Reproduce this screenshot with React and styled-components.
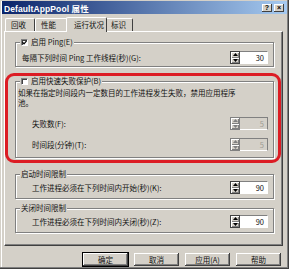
import React from "react";
import styled, { createGlobalStyle } from "styled-components";

const GlobalStyle = createGlobalStyle`
  html, body {
    margin: 0;
    padding: 0;
    background: #d4d0c8;
  }
  body {
    font-family: "Noto Sans CJK SC", "Liberation Sans", sans-serif;
    font-size: 7.5px;
    color: #111;
  }
`;

const Window = styled.div`
  width: 289px;
  height: 269px;
  box-sizing: border-box;
  padding: 1px 2px 0;
  background: #d4d0c8;
  box-shadow: inset -1px -1px #404040, inset -2px -2px #808080,
    inset 1px 1px #d4d0c8, inset 2px 2px #fff;
  display: flex;
  flex-direction: column;
`;

const TitleBar = styled.div`
  height: 13px;
  display: flex;
  align-items: center;
  padding: 0 3px 0 2px;
  background: linear-gradient(to right, #0a246a, #a6caf0);
  color: #fff;
`;

const TitleText = styled.span`
  font-family: "Liberation Sans", "Noto Sans CJK SC", sans-serif;
  font-size: 8.5px;
  font-weight: bold;
  letter-spacing: 0.1px;
`;

const TitleButtons = styled.div`
  margin-left: auto;
  display: flex;
  gap: 2px;
`;

const TitleButton = styled.span`
  width: 10px;
  height: 8px;
  background: #d4d0c8;
  color: #000;
  box-shadow: inset -1px -1px #404040, inset 1px 1px #fff;
  font-family: "Liberation Sans", sans-serif;
  font-size: 7px;
  font-weight: bold;
  line-height: 8px;
  text-align: center;
`;

const TabRow = styled.div`
  height: 16px;
  margin-top: 1px;
  padding-left: 3px;
  display: flex;
  align-items: flex-end;
  position: relative;
  z-index: 1;
`;

const Tab = styled.div`
  width: ${(p) => p.$w}px;
  height: ${(p) => (p.$active ? 15 : 13)}px;
  box-sizing: border-box;
  margin: ${(p) => (p.$active ? "0 -2px -1px -2px" : "0")};
  padding-left: ${(p) => (p.$active ? 7 : 5)}px;
  background: #d4d0c8;
  border-top: 1px solid #fff;
  border-left: 1px solid #fff;
  border-right: 1px solid #404040;
  border-radius: 2px 2px 0 0;
  line-height: ${(p) => (p.$active ? 13 : 12)}px;
  white-space: nowrap;
  position: relative;
  z-index: ${(p) => (p.$active ? 2 : 1)};
`;

const Panel = styled.div`
  height: 215px;
  box-sizing: border-box;
  margin: 0 4px 0 2px;
  padding: 5px 8px 0 10px;
  border-top: 1px solid #fff;
  border-left: 1px solid #fff;
  border-right: 1px solid #404040;
  border-bottom: 1px solid #404040;
  box-shadow: inset -1px -1px #808080;
`;

const Group = styled.fieldset`
  margin: ${(p) => p.$top || 0}px 0 0;
  padding: 0 5px ${(p) => p.$bottom || 2}px 0;
  min-width: 0;
  border: 1px solid #808080;
  box-shadow: inset 1px 1px #fff, 1px 1px #fff;
`;

const Legend = styled.legend`
  margin-left: 4px;
  padding: 0 1px;
  height: 10px;
  line-height: 10px;
  display: flex;
  align-items: center;
  gap: 3px;
  background: #d4d0c8;
  white-space: nowrap;
`;

const Check = styled.span`
  width: 7px;
  height: 7px;
  box-sizing: border-box;
  background: #fff;
  border-top: 1px solid #808080;
  border-left: 1px solid #808080;
  border-right: 1px solid #fff;
  border-bottom: 1px solid #fff;
  box-shadow: inset 1px 1px #404040;
  display: flex;
  align-items: center;
  justify-content: center;
`;

const Highlight = styled.div`
  margin: 6px -7px 0 -10px;
  padding: 0 4px 2px 7px;
  border: 3px solid #dc1c24;
  border-radius: 9px;
`;

const Row = styled.div`
  height: 13px;
  margin-top: ${(p) => p.$top || 0}px;
  padding-left: ${(p) => p.$indent}px;
  display: flex;
  align-items: center;
  white-space: nowrap;
`;

const Desc = styled.div`
  margin-top: 2px;
  padding-left: 2px;
  display: flex;
  flex-direction: column;
`;

const DescLine = styled.span`
  height: 10px;
  line-height: 10px;
  white-space: nowrap;
`;

const Spin = styled.div`
  width: 38px;
  height: 13px;
  margin-left: auto;
  display: flex;
`;

const Arrows = styled.div`
  width: 10px;
  display: flex;
  flex-direction: column;
  border: 1px solid ${(p) => (p.$disabled ? "#808080" : "#404040")};
  box-sizing: border-box;
`;

const ArrowBtn = styled.span`
  flex: 1;
  background: #d4d0c8;
  box-shadow: inset 1px 1px #fff, inset -1px -1px #808080;
  display: flex;
  align-items: center;
  justify-content: center;
`;

const SpinValue = styled.span`
  flex: 1;
  box-sizing: border-box;
  padding-right: 3px;
  background: ${(p) => (p.$disabled ? "#d4d0c8" : "#fff")};
  color: ${(p) => (p.$disabled ? "#a09c94" : "#111")};
  border-top: 1px solid #808080;
  border-bottom: 1px solid #fff;
  border-right: 1px solid ${(p) => (p.$disabled ? "#808080" : "#fff")};
  text-align: right;
  line-height: 11px;
`;

const ButtonRow = styled.div`
  margin-top: 6px;
  padding-right: 5px;
  display: flex;
  justify-content: flex-end;
  gap: 4px;
`;

const Button = styled.div`
  width: 47px;
  height: 15px;
  box-sizing: border-box;
  background: #d4d0c8;
  border: 1px solid ${(p) => (p.$default ? "#000" : "transparent")};
  box-shadow: inset -1px -1px #404040, inset 1px 1px #fff,
    inset -2px -2px #808080;
  display: flex;
  align-items: center;
  justify-content: center;
  line-height: 13px;
`;

const Triangle = ({ up, color }) => (
  <svg width="5" height="3" viewBox="0 0 5 3">
    <path d={up ? "M0 3 L2.5 0 L5 3 Z" : "M0 0 L2.5 3 L5 0 Z"} fill={color} />
  </svg>
);

const Spinner = ({ value, disabled }) => {
  const c = disabled ? "#808080" : "#000";
  return (
    <Spin>
      <Arrows $disabled={disabled}>
        <ArrowBtn>
          <Triangle up color={c} />
        </ArrowBtn>
        <ArrowBtn>
          <Triangle color={c} />
        </ArrowBtn>
      </Arrows>
      <SpinValue $disabled={disabled}>{value}</SpinValue>
    </Spin>
  );
};

const CheckBox = ({ checked }) => (
  <Check>
    {checked && (
      <svg width="5" height="5" viewBox="0 0 5 5">
        <path d="M0.5 2.2 L2 3.8 L4.6 0.8" stroke="#000" strokeWidth="1.2" fill="none" />
      </svg>
    )}
  </Check>
);

const tabs = [
  { label: "回收", w: 30 },
  { label: "性能", w: 33 },
  { label: "运行状况", w: 41, active: true },
  { label: "标识", w: 28 },
];

export default function App() {
  return (
    <>
      <GlobalStyle />
      <Window>
        <TitleBar>
          <TitleText>DefaultAppPool 属性</TitleText>
          <TitleButtons>
            <TitleButton>?</TitleButton>
            <TitleButton>×</TitleButton>
          </TitleButtons>
        </TitleBar>

        <TabRow>
          {tabs.map((t) => (
            <Tab key={t.label} $w={t.w} $active={t.active}>
              {t.label}
            </Tab>
          ))}
        </TabRow>

        <Panel>
          <Group $bottom={2}>
            <Legend>
              <CheckBox checked />
              启用 Ping(E)
            </Legend>
            <Row $indent={6} $top={4}>
              每隔下列时间 Ping 工作线程(秒)(G):
              <Spinner value="30" />
            </Row>
          </Group>

          <Highlight>
            <Group $bottom={6}>
              <Legend>
                <CheckBox />
                启用快速失败保护(B)
              </Legend>
              <Desc>
                <DescLine>如果在指定时间段内一定数目的工作进程发生失败，禁用应用程序</DescLine>
                <DescLine>池。</DescLine>
              </Desc>
              <Row $indent={16} $top={9}>
                失败数(F):
                <Spinner value="5" disabled />
              </Row>
              <Row $indent={16} $top={8}>
                时间段(分钟)(T):
                <Spinner value="5" disabled />
              </Row>
            </Group>
          </Highlight>

          <Group $top={6} $bottom={4}>
            <Legend>启动时间限制</Legend>
            <Row $indent={16} $top={2}>
              工作进程必须在下列时间内开始(秒)(K):
              <Spinner value="90" />
            </Row>
          </Group>

          <Group $top={4} $bottom={4}>
            <Legend>关闭时间限制</Legend>
            <Row $indent={16} $top={2}>
              工作进程必须在下列时间内关闭(秒)(Z):
              <Spinner value="90" />
            </Row>
          </Group>
        </Panel>

        <ButtonRow>
          <Button $default>确定</Button>
          <Button>取消</Button>
          <Button>应用(A)</Button>
          <Button>帮助</Button>
        </ButtonRow>
      </Window>
    </>
  );
}
